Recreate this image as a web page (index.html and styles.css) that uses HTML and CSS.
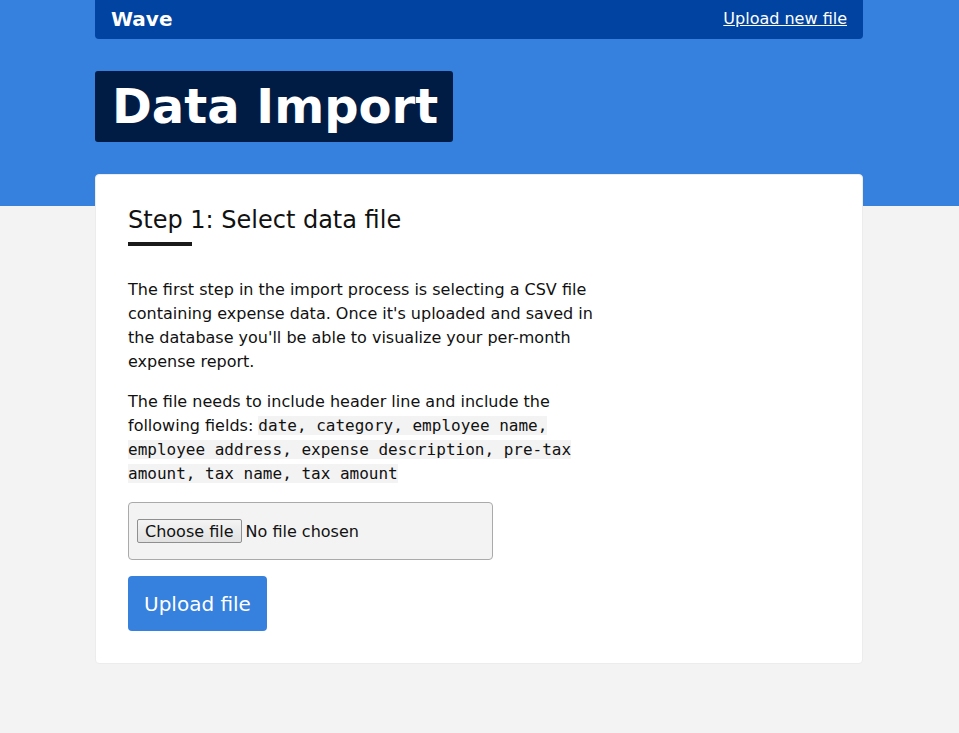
FILE: index.html
```html
<!DOCTYPE html>
<html lang="en">
<head>
<meta charset="utf-8">
<title>Data Import</title>
<link rel="stylesheet" href="styles.css">
</head>
<body>
<div class="page">
  <nav class="navbar">
    <span class="brand">Wave</span>
    <a class="nav-link" href="#">Upload new file</a>
  </nav>
  <h1 class="title">Data Import</h1>
  <section class="card">
    <h2 class="step-title">Step 1: Select data file</h2>
    <div class="underline"></div>
    <p class="text">The first step in the import process is selecting a CSV file containing expense data. Once it's uploaded and saved in the database you'll be able to visualize your per-month expense report.</p>
    <p class="text">The file needs to include header line and include the following fields: <code>date, category, employee name, employee address, expense description, pre-tax amount, tax name, tax amount</code></p>
    <form class="upload-form">
      <label class="file-box">
        <input type="file" class="file-hidden">
        <span class="file-btn">Choose file</span>
        <span class="file-name">No file chosen</span>
      </label>
      <button type="button" class="btn">Upload file</button>
    </form>
  </section>
</div>
</body>
</html>
```
FILE: styles.css
```css
html, body {
  margin: 0;
  padding: 0;
}
body {
  font-family: "DejaVu Sans", sans-serif;
  font-size: 16px;
  color: #111;
  background: linear-gradient(#3680de 0, #3680de 206px, #f3f3f3 206px);
  min-height: 733px;
}
.page {
  width: 768px;
  margin: 0 0 0 calc((100% - 769px) / 2);
  display: flex;
  flex-direction: column;
  align-items: flex-start;
}
.navbar {
  align-self: stretch;
  height: 37px;
  padding: 0 16px 2px 16px;
  background: #0043a0;
  border-radius: 0 0 4px 4px;
  display: flex;
  align-items: center;
  justify-content: space-between;
  color: #fff;
}
.brand {
  font-weight: bold;
  font-size: 20px;
}
.nav-link {
  color: #fff;
  font-size: 16px;
  text-decoration: underline;
}
.title {
  margin: 32px 0 32px;
  background: #001c45;
  color: #fff;
  font-size: 48px;
  font-weight: bold;
  line-height: 57px;
  padding: 7px 15px 7px 17px;
  border-radius: 3px;
}
.card {
  align-self: stretch;
  background: #fff;
  border: 1px solid #ececec;
  border-radius: 4px;
  padding: 31px 32px 32px 32px;
}
.step-title {
  margin: 0;
  font-size: 24px;
  font-weight: normal;
  line-height: 29px;
}
.underline {
  width: 64px;
  height: 4px;
  background: #1a1a1a;
  margin: 7px 0 32px;
}
.text {
  max-width: 470px;
  line-height: 24px;
  margin: 0 0 16px;
}
code {
  font-family: "DejaVu Sans Mono", monospace;
  font-size: 16px;
  background: #f3f3f3;
}
.upload-form {
  display: flex;
  flex-direction: column;
  align-items: flex-start;
  gap: 16px;
  margin-top: 16px;
}
.file-box {
  box-sizing: border-box;
  width: 365px;
  height: 58px;
  padding: 0 8px;
  background: #f3f3f3;
  border: 1px solid #aaa;
  border-radius: 4px;
  display: flex;
  align-items: center;
  gap: 4px;
  cursor: pointer;
}
.file-hidden {
  display: none;
}
.file-btn {
  box-sizing: border-box;
  height: 24px;
  padding: 0 7px;
  display: flex;
  align-items: center;
  background: linear-gradient(#f4f4f4, #e2e2e2);
  border: 1px solid #8f8f8f;
  border-radius: 2px;
  color: #111;
}
.file-name {
  color: #111;
}
.btn {
  background: #3680de;
  color: #fff;
  border: none;
  border-radius: 4px;
  font-family: "DejaVu Sans", sans-serif;
  font-size: 20px;
  padding: 0 16px;
  height: 55px;
}
```
